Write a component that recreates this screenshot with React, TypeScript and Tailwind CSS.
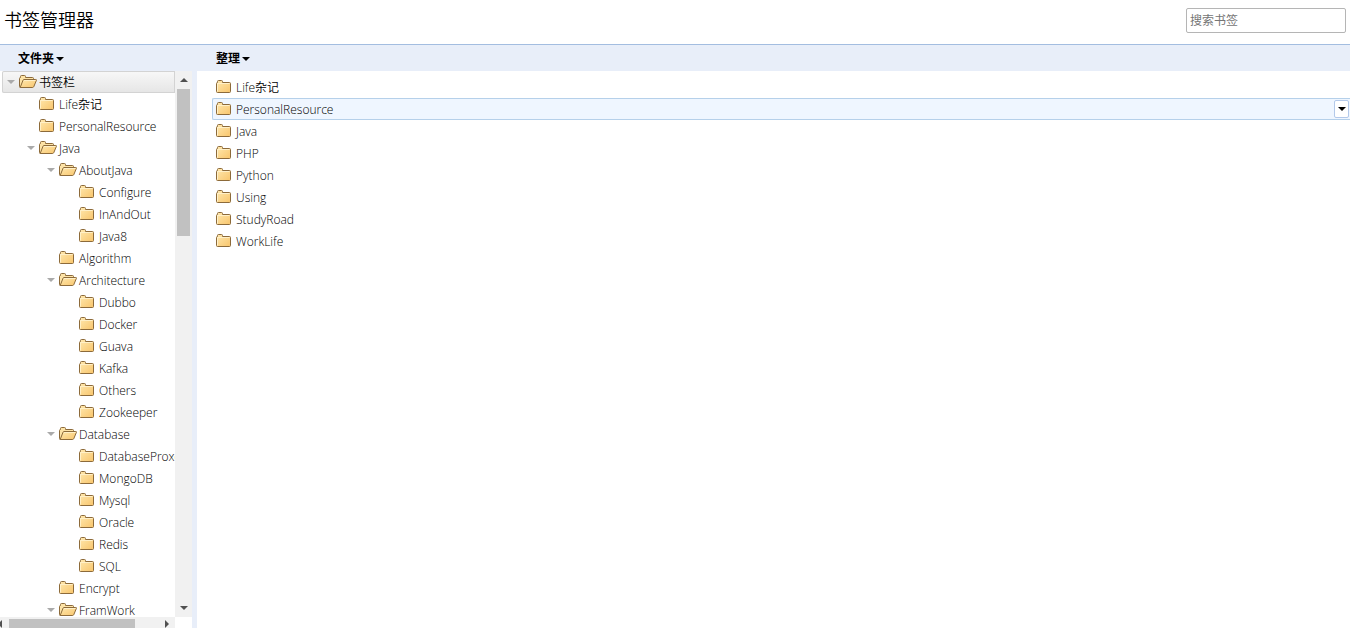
import { useState } from "react"

type Folder = { name: string; level: number; open?: boolean }

const tree: Folder[] = [
  { name: "书签栏", level: 0, open: true },
  { name: "Life杂记", level: 1 },
  { name: "PersonalResource", level: 1 },
  { name: "Java", level: 1, open: true },
  { name: "AboutJava", level: 2, open: true },
  { name: "Configure", level: 3 },
  { name: "InAndOut", level: 3 },
  { name: "Java8", level: 3 },
  { name: "Algorithm", level: 2 },
  { name: "Architecture", level: 2, open: true },
  { name: "Dubbo", level: 3 },
  { name: "Docker", level: 3 },
  { name: "Guava", level: 3 },
  { name: "Kafka", level: 3 },
  { name: "Others", level: 3 },
  { name: "Zookeeper", level: 3 },
  { name: "Database", level: 2, open: true },
  { name: "DatabaseProxool", level: 3 },
  { name: "MongoDB", level: 3 },
  { name: "Mysql", level: 3 },
  { name: "Oracle", level: 3 },
  { name: "Redis", level: 3 },
  { name: "SQL", level: 3 },
  { name: "Encrypt", level: 2 },
  { name: "FramWork", level: 2, open: true },
]

const items = ["Life杂记", "PersonalResource", "Java", "PHP", "Python", "Using", "StudyRoad", "WorkLife"]

const indent = ["pl-0", "pl-5", "pl-10", "pl-15"]

function ClosedFolder() {
  return (
    <svg className="block h-4 w-5 shrink-0" viewBox="0 0 20 16" aria-hidden="true">
      <path
        d="M.5 12.5V4.5Q.5 3.5 1.5 3.5V2.5Q1.5 1.5 2.5 1.5H5.5Q6.5 1.5 6.5 2.5V3.5H13.5Q14.5 3.5 14.5 4.5V12.5Q14.5 13.5 13.5 13.5H1.5Q.5 13.5 .5 12.5Z"
        fill="url(#folder)"
        stroke="#8c6a3a"
      />
      <path d="M1.5 12.5V4.5H13.5" fill="none" stroke="#fff0c8" />
    </svg>
  )
}

function OpenFolder() {
  return (
    <svg className="block h-4 w-5 shrink-0" viewBox="0 0 20 16" aria-hidden="true">
      <path
        d="M.5 12.5V4.5Q.5 3.5 1.5 3.5V2.5Q1.5 1.5 2.5 1.5H5.5Q6.5 1.5 6.5 2.5V3.5H13.5Q14.5 3.5 14.5 4.5V12L13 13.5H1.5Q.5 13.5 .5 12.5Z"
        fill="#fde3a6"
        stroke="#8c6a3a"
      />
      <path d="M1.2 13.5L4 6.2Q4.3 5.5 5 5.5H16.8Q17.8 5.5 17.4 6.4L14.8 12.6Q14.4 13.5 13.4 13.5Z" fill="url(#folder)" stroke="#8c6a3a" />
      <path d="M5 6.5H16.5" stroke="#fff0c8" />
    </svg>
  )
}

function Caret({ className }: { className: string }) {
  return (
    <svg className={className} viewBox="0 0 8 4" aria-hidden="true">
      <path d="M0 0H8L4 4Z" fill="currentColor" />
    </svg>
  )
}

export default function App() {
  const [active, setActive] = useState("PersonalResource")

  return (
    <div className="flex h-screen flex-col overflow-hidden bg-white font-['Open_Sans','Noto_Sans_CJK_SC',sans-serif] text-xs text-black">
      <svg className="absolute h-0 w-0" aria-hidden="true">
        <defs>
          <linearGradient id="folder" x1="0" y1="0" x2="1" y2="1">
            <stop offset="0" stopColor="#ffe9b0" />
            <stop offset="1" stopColor="#f8c56c" />
          </linearGradient>
        </defs>
      </svg>

      <header className="flex h-11 shrink-0 items-center justify-between pr-1 pb-1 pl-1">
        <h1 className="text-lg font-[350]">书签管理器</h1>
        <input
          type="search"
          aria-label="搜索书签"
          placeholder="搜索书签"
          className="h-[25px] w-40 rounded-xs border border-[#b5b5b5] px-[3px] text-xs placeholder:text-[#757575]"
        />
      </header>

      <div className="flex h-[27px] shrink-0 items-center border-t border-[#a3bde0] bg-[#e8eef9] pt-px font-bold">
        <div className="w-[216px] pl-[18px]">
          <button className="flex items-center gap-0.5">
            文件夹
            <Caret className="h-1 w-2" />
          </button>
        </div>
        <button className="flex items-center gap-0.5">
          整理
          <Caret className="h-1 w-2" />
        </button>
      </div>

      <main className="flex min-h-0 flex-1 font-[350]">
        <aside className="flex w-48 shrink-0 flex-col">
          <div className="flex min-h-0 flex-1">
            <ul className="min-w-0 flex-1 overflow-hidden pl-0.5">
              {tree.map((f, i) => (
                <li
                  key={i}
                  className={
                    i === 0
                      ? "h-[22px] rounded-l-xs bg-linear-to-b from-[#f8f8f8] to-[#e5e5e5] inset-ring inset-ring-[#d3d3d3]"
                      : "h-[22px]"
                  }
                >
                  <div className={"flex h-full items-center whitespace-nowrap " + indent[f.level]}>
                    <span className="flex w-[17px] shrink-0 justify-center text-[#aaa]">
                      {f.open && <Caret className="h-1 w-2" />}
                    </span>
                    {f.open ? <OpenFolder /> : <ClosedFolder />}
                    <span className="pt-0.5">{f.name}</span>
                  </div>
                </li>
              ))}
            </ul>
            <div className="flex w-[17px] shrink-0 flex-col items-center bg-[#f1f1f1] text-[#505050]">
              <button aria-label="向上滚动" className="flex h-[18px] w-full shrink-0 items-center justify-center">
                <Caret className="h-1 w-2 rotate-180" />
              </button>
              <div className="h-[147px] w-[13px] bg-[#c1c1c1]" />
              <button aria-label="向下滚动" className="mt-auto flex h-[18px] w-full shrink-0 items-center justify-center">
                <Caret className="h-1 w-2" />
              </button>
            </div>
          </div>
          <div className="flex h-[11px] shrink-0 overflow-hidden pr-[17px] text-[#505050]">
            <div className="flex flex-1 items-end bg-[#f1f1f1]">
              <button aria-label="向左滚动" className="flex h-2 w-[9px] items-center">
                <svg className="h-2 w-1" viewBox="2 0 4 8" aria-hidden="true">
                  <path d="M4 0V8L0 4Z" fill="currentColor" />
                </svg>
              </button>
              <div className="h-[9px] w-[126px] bg-[#c1c1c1]" />
              <button aria-label="向右滚动" className="ml-auto flex h-2 w-[10px] items-center">
                <svg className="h-2 w-1" viewBox="0 0 4 8" aria-hidden="true">
                  <path d="M0 0V8L4 4Z" fill="currentColor" />
                </svg>
              </button>
            </div>
          </div>
        </aside>

        <div className="w-[5px] shrink-0 bg-[#e8eef9]" />

        <ul className="min-w-0 flex-1 pt-[5px] pl-[15px]">
          {items.map((name) => (
            <li
              key={name}
              onClick={() => setActive(name)}
              className={
                name === active
                  ? "flex h-[22px] items-center rounded-l-xs border border-r-0 border-[#b5d0ea] bg-[#eff6ff] pl-[3px]"
                  : "flex h-[22px] items-center pl-1"
              }
            >
              <ClosedFolder />
              <span className="pt-0.5">{name}</span>
              {name === active && (
                <button
                  aria-label="更多"
                  className="mr-px ml-auto flex h-[18px] w-[15px] items-center justify-center rounded-xs border border-[#b3c9ea] bg-white"
                >
                  <Caret className="h-1 w-2" />
                </button>
              )}
            </li>
          ))}
        </ul>
      </main>
    </div>
  )
}
